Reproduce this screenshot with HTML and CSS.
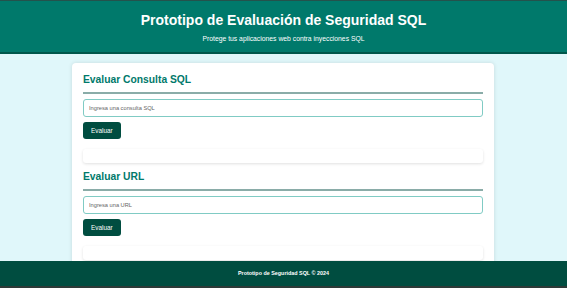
FILE: index.html
```html
<!DOCTYPE html>
<html lang="es">
<head>
    <meta charset="UTF-8">
    <meta name="viewport" content="width=device-width, initial-scale=1.0">
    <title>Prototipo de Evaluación de Seguridad SQL</title>
    <link rel="stylesheet" href="styles.css">
</head>
<body>
    <header class="header">
        <h1>Prototipo de Evaluación de Seguridad SQL</h1>
        <p>Protege tus aplicaciones web contra inyecciones SQL</p>
    </header>

    <main class="main">
        <div class="container">
            <section class="seccion">
                <h2>Evaluar Consulta SQL</h2>
                <input type="text" class="campo" placeholder="Ingresa una consulta SQL">
                <button class="boton">Evaluar</button>
                <div class="resultado"></div>
            </section>

            <section class="seccion">
                <h2>Evaluar URL</h2>
                <input type="text" class="campo" placeholder="Ingresa una URL">
                <button class="boton">Evaluar</button>
                <div class="resultado"></div>
            </section>
        </div>
    </main>

    <footer class="footer">
        <p>Prototipo de Seguridad SQL &copy; 2024</p>
    </footer>
</body>
</html>
```

FILE: styles.css
```css
html, body {
    height: 100%;
}

body {
    font-family: "Liberation Sans", Arial, sans-serif;
    background-color: #e0f7fa;
    margin: 0;
    display: flex;
    flex-direction: column;
    overflow: hidden;
}

.header {
    background-color: #00796b;
    color: white;
    text-align: center;
    border-top: 1px solid #24524c;
    border-bottom: 2px solid #00574b;
    padding: 10px 0 8px;
}

.header h1 {
    margin: 0;
    font-size: 14px;
    line-height: 18px;
}

.header p {
    margin: 5px 0 0;
    font-size: 6.8px;
    line-height: 10px;
}

.main {
    flex: 1;
    overflow: hidden;
    padding-top: 9px;
}

.container {
    width: 400px;
    margin: 0 72px 0 auto;
    margin-left: 72px;
    background: white;
    padding: 9px 11px;
    border-radius: 4px;
    box-shadow: 0 0 4px rgba(0, 0, 0, 0.12);
}

.seccion h2 {
    margin: 0;
    color: #00796b;
    font-size: 10.3px;
    line-height: 16px;
    padding-bottom: 4px;
    border-bottom: 2px solid #8aaca8;
}

.campo {
    display: block;
    box-sizing: border-box;
    width: 100%;
    height: 18px;
    margin-top: 5px;
    padding: 0 5px;
    border: 1px solid #80cbc4;
    border-radius: 3px;
    font-family: inherit;
    font-size: 5.7px;
}

.campo::placeholder {
    color: #666;
}

.boton {
    display: block;
    margin-top: 5px;
    height: 17px;
    padding: 0 8px;
    background-color: #004d40;
    color: white;
    border: none;
    border-radius: 3px;
    font-family: inherit;
    font-size: 6.4px;
}

.resultado {
    height: 14px;
    margin: 10px 0 6px;
    border-radius: 3px;
    background: white;
    box-shadow: 0 1px 3px rgba(0, 0, 0, 0.12);
}

.footer {
    background-color: #004d40;
    color: white;
    text-align: center;
    border-bottom: 2px solid #2d3a37;
}

.footer p {
    margin: 0;
    line-height: 25px;
    font-size: 5.4px;
    font-weight: bold;
}
```
